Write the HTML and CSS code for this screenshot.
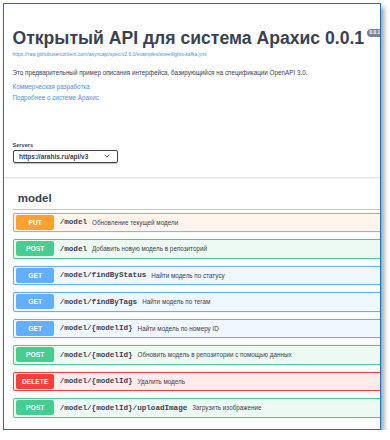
FILE: index.html
```html
<!DOCTYPE html>
<html lang="ru">
<head>
<meta charset="utf-8">
<title>Открытый API для система Арахис</title>
<link rel="stylesheet" href="styles.css">
</head>
<body>
<div class="frame">
  <div class="inner">
    <section class="info">
      <div class="title-row">
        <h2 class="title">Открытый API для система Арахис 0.0.1</h2>
        <span class="version">0.0.1</span>
      </div>
      <a class="url" href="#">https://raw.githubusercontent.com/asyncapi/spec/v2.6.0/examples/streetlights-kafka.yml</a>
      <p class="desc">Это предварительный пример описания интерфейса, базирующийся на спецификации OpenAPI 3.0.</p>
      <a class="link first" href="#">Коммерческая разработка</a>
      <a class="link" href="#">Подробнее о системе Арахис</a>
    </section>
    <section class="schemes">
      <div class="servers-label">Servers</div>
      <div class="select"><span>https://arahis.ru/api/v3</span>
        <svg class="chev" width="6" height="4" viewBox="0 0 6 4"><path d="M0.7 0.8 L3 3 L5.3 0.8" fill="none" stroke="#3b4151" stroke-width="0.9"/></svg>
      </div>
    </section>
    <section class="tag">
      <h3 class="tag-title">model</h3>
      <div class="op put"><span class="method">PUT</span><span class="path">/model</span><span class="summary">Обновление текущей модели</span></div>
      <div class="op post"><span class="method">POST</span><span class="path">/model</span><span class="summary">Добавить новую модель в репозиторий</span></div>
      <div class="op get"><span class="method">GET</span><span class="path">/model/findByStatus</span><span class="summary">Найти модель по статусу</span></div>
      <div class="op get"><span class="method">GET</span><span class="path">/model/findByTags</span><span class="summary">Найти модель по тегам</span></div>
      <div class="op get"><span class="method">GET</span><span class="path">/model/{modelId}</span><span class="summary">Найти модель по номеру ID</span></div>
      <div class="op post"><span class="method">POST</span><span class="path">/model/{modelId}</span><span class="summary">Обновить модель в репозитории с помощью данных</span></div>
      <div class="op delete"><span class="method">DELETE</span><span class="path">/model/{modelId}</span><span class="summary">Удалить модель</span></div>
      <div class="op post"><span class="method">POST</span><span class="path">/model/{modelId}/uploadImage</span><span class="summary">Загрузить изображение</span></div>
    </section>
  </div>
</div>
</body>
</html>
```
FILE: styles.css
```css
* { box-sizing: border-box; }
html, body { margin: 0; padding: 0; background: #ffffff; }
body { font-family: "Liberation Sans", Arial, sans-serif; color: #3b4151; }

.frame {
  margin: 3px 0 0 3px;
  width: 378px;
  height: 427px;
  border: 1.5px solid #1f70c4;
  background: #ffffff;
  box-shadow: 3px 4px 5px rgba(0, 0, 0, 0.38);
  overflow: hidden;
}
.inner { width: 420px; }

.info { padding: 23.5px 0 0 8.5px; }
.title-row { display: flex; align-items: flex-start; height: 20px; }
.title {
  margin: 0;
  font-size: 17.6px;
  line-height: 20px;
  font-weight: 700;
  color: #3b4151;
  white-space: nowrap;
}
.version {
  margin: 1.5px 0 0 3px;
  padding: 0 2.5px;
  height: 7.5px;
  line-height: 7.5px;
  border-radius: 4px;
  background: #7d8492;
  color: #ffffff;
  font-size: 4.8px;
  font-weight: 700;
}
.url {
  display: block;
  margin-top: 2px;
  font-size: 5px;
  line-height: 8px;
  color: #4990e2;
  text-decoration: none;
}
.desc {
  margin: 11px 0 0;
  font-size: 6.3px;
  line-height: 8px;
  color: #3b4151;
}
.link {
  display: block;
  margin-top: 3px;
  font-size: 6.3px;
  line-height: 8px;
  color: #4990e2;
  text-decoration: none;
}
.link.first { margin-top: 6px; }

.schemes {
  margin-top: 40.5px;
  padding: 0 0 14px 8.5px;
  border-bottom: 1px solid #e6e7e9;
  box-shadow: 0 1px 1px rgba(0, 0, 0, 0.04);
}
.servers-label {
  font-size: 5.6px;
  line-height: 7px;
  font-weight: 700;
  color: #3b4151;
}
.select {
  margin-top: 0.5px;
  width: 105px;
  height: 13px;
  border: 1px solid #41444e;
  border-radius: 2px;
  box-shadow: 0 0.5px 1px rgba(0, 0, 0, 0.25);
  display: flex;
  align-items: center;
  justify-content: space-between;
  padding: 0 7px 0 5.5px;
  font-size: 6.5px;
  font-weight: 700;
  color: #3b4151;
}
.chev { display: block; }

.tag { padding: 0 0 0 8.8px; }
.tag-title {
  margin: 12px 0 0;
  padding: 0 0 3px 5px;
  font-size: 11.5px;
  line-height: 16px;
  font-weight: 700;
  color: #3b4151;
  border-bottom: 1px solid rgba(59, 65, 81, 0.3);
}
.op {
  display: flex;
  align-items: center;
  height: 19.5px;
  margin-top: 7px;
  padding-left: 2.4px;
  border: 1px solid;
  border-radius: 2px;
  box-shadow: 0 0 1.5px rgba(0, 0, 0, 0.19);
  white-space: nowrap;
}
.op:first-of-type { margin-top: 3px; }
.method {
  flex: none;
  width: 38px;
  height: 15px;
  line-height: 15px;
  border-radius: 2px;
  text-align: center;
  color: #ffffff;
  font-size: 6.7px;
  font-weight: 700;
}
.path {
  margin-left: 5.5px;
  font-family: "Liberation Mono", "Courier New", monospace;
  font-weight: 700;
  font-size: 7.6px;
  color: #3b4151;
}
.summary {
  margin-left: 5px;
  font-size: 6.3px;
  color: #3b4151;
}
.put { background: #fff5ea; border-color: #fca130; }
.put .method { background: #fca130; }
.post { background: #edfaf4; border-color: #49cc90; }
.post .method { background: #49cc90; }
.get { background: #eff7ff; border-color: #61affe; }
.get .method { background: #61affe; }
.delete { background: #feecec; border-color: #f93e3e; }
.delete .method { background: #f93e3e; }
```
